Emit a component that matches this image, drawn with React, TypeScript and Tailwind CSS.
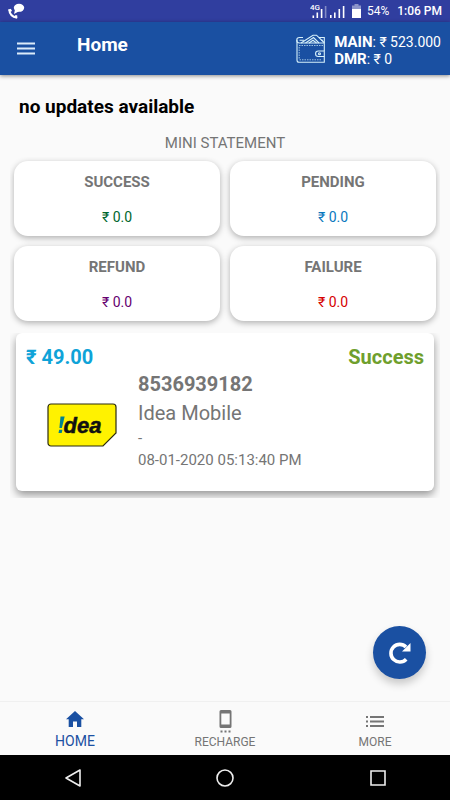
import React from 'react';

interface Total {
  id: string;
  label: string;
  amount: string;
  color: string;
}

const totals: Total[] = [
  { id: 'success', label: 'SUCCESS', amount: '₹ 0.0', color: 'text-[#00662e]' },
  { id: 'pending', label: 'PENDING', amount: '₹ 0.0', color: 'text-[#0a78be]' },
  { id: 'refund', label: 'REFUND', amount: '₹ 0.0', color: 'text-[#660070]' },
  { id: 'failure', label: 'FAILURE', amount: '₹ 0.0', color: 'text-[#d60000]' },
];

const StatusBar: React.FC = () => (
  <div className="h-[22px] bg-[#303e9f] flex items-center justify-between px-2 text-white">
    <svg className="w-[18px] h-[16px]" viewBox="0 0 18 16" fill="#fff">
      <ellipse cx="11" cy="4.8" rx="5.2" ry="4" />
      <path d="M7 6.5L6 11l5-2.8z" />
      <path d="M1.2 6.2C1.4 10.5 4.4 14 9.2 14.8" fill="none" stroke="#fff" strokeWidth="2" />
      <path d="M1.6 6.4l1.2 2.2M6.8 13.6l2.4 0" fill="none" stroke="#fff" strokeWidth="2.8" />
    </svg>
    <div className="flex items-center">
      <svg className="w-[36px] h-[16px]" viewBox="0 0 36 16" fill="#fff">
        <text x="0" y="7" fontSize="8" fontWeight="500" fontFamily="Roboto, sans-serif">4G</text>
        <path d="M2.5 12.5h1.6V15H2.5zM6.5 9.5h1.6V15H6.5zM10.8 6h1.6v9h-1.6z" />
        <path d="M14.8 3h1.6v12h-1.6z" opacity="0.4" />
        <path d="M20 12h1.6v3H20zM24 9.5h1.6V15H24zM28.5 6h1.6v9h-1.6zM32.8 3h1.6v12h-1.6z" />
      </svg>
      <svg className="w-[9px] h-[14px] ml-1.5" viewBox="0 0 9 14" fill="#fff">
        <path d="M2.5 0h4v1.5H9V5H0V1.5h2.5z" opacity="0.45" />
        <path d="M0 5h9v9H0z" />
      </svg>
      <span className="ml-1.5 text-[12px]">54%</span>
      <span className="ml-2 text-[12px] font-medium">1:06 PM</span>
    </div>
  </div>
);

const WalletIcon: React.FC = () => (
  <svg className="w-[30px] h-[30px]" viewBox="0 0 30 30" fill="none" stroke="#d6f0fa" strokeWidth="1.1">
    <path d="M7 3.5H3.5a2.7 2.7 0 0 0 0 5.500H28.300V17" />
    <path d="M1 6v20.200a2 2 0 0 0 2 2h25.300V22.500" />
    <path d="M23 3.500h5.300V9" />
    <path d="M5 9L17 1.200l3.500 0L28 8.500M9.500 9L17.500 3.500 23 9M13 9l4-2.800 3.500 2.800" />
    <path d="M3.500 6.200H8M25 6.200h2" />
    <path d="M3 11.500h24M3.500 25.800H26M3.200 13v12" strokeDasharray="1.500 1" strokeWidth="0.700" />
    <path d="M28.300 17h-6a2.700 2.700 0 0 0 0 5.500h6z" />
    <circle cx="23.500" cy="19.700" r="1" />
  </svg>
);

const AppBar: React.FC = () => (
  <header className="h-[53px] bg-[#1a50a2] text-white flex items-center pl-[17px] pr-[9px] shadow-[0_1px_4px_rgba(0,0,0,0.45)] relative">
    <button type="button" aria-label="Menu">
      <svg className="w-[18px] h-[13px]" viewBox="0 0 18 13" stroke="#dcebfa" strokeWidth="2">
        <path d="M0 1.500h18M0 6.500h18M0 11.500h18" />
      </svg>
    </button>
    <h1 className="ml-[42px] mb-1.5 text-[19px] font-bold">Home</h1>
    <div className="ml-auto flex items-center">
      <WalletIcon />
      <div className="ml-2 pt-1 text-[14px] leading-[17px]">
        <p><b className="text-[15px]">MAIN</b>: ₹ 523.000</p>
        <p><b className="text-[15px]">DMR</b>: ₹ 0</p>
      </div>
    </div>
  </header>
);

const TotalCard: React.FC<{ total: Total }> = ({ total }) => (
  <div className="h-[75px] bg-white rounded-[14px] shadow-[0_2px_6px_rgba(0,0,0,0.3)] flex flex-col items-center pt-3 text-[14px] leading-[18px]">
    <h3 className="font-bold text-[15px] text-[#757575]">{total.label}</h3>
    <p className={`mt-[17px] ${total.color}`}>{total.amount}</p>
  </div>
);

const IdeaLogo: React.FC = () => (
  <svg className="w-[70px] h-[44px]" viewBox="0 0 70 44" role="img" aria-label="Idea">
    <path d="M4 1h62a3 3 0 0 1 3 3v26L56 43H4a3 3 0 0 1-3-3V4a3 3 0 0 1 3-3z" fill="#fff200" stroke="#2b2b10" strokeWidth="1.200" />
    <path d="M13.500 13.500h4.200l-2.800 11.500h-2.500z" fill="#008290" />
    <path d="M12.200 26.700h3.200l-.7 3.300h-3.200z" fill="#008290" />
    <text x="16.500" y="30" fontSize="22" fontWeight="700" fontStyle="italic" fontFamily="'Liberation Sans', sans-serif" fill="#111" stroke="#111" strokeWidth="0.500">dea</text>
  </svg>
);

const TransactionCard: React.FC = () => (
  <article className="mx-1.5 bg-white rounded-[6px] shadow-[0_4px_8px_rgba(0,0,0,0.4)] px-2.5 pt-3 pb-5 text-[#757575]">
    <div className="flex justify-between text-[20px] leading-6 font-bold">
      <span className="text-[#0fa3d8]">₹ 49.00</span>
      <span className="text-[#6f9f2d]">Success</span>
    </div>
    <div className="flex items-center pt-px">
      <div className="w-[112px] flex justify-center pt-2">
        <IdeaLogo />
      </div>
      <div>
        <p className="text-[20px] leading-[29px] font-bold">8536939182</p>
        <p className="text-[20px] leading-[29px]">Idea Mobile</p>
        <p className="text-[15px] leading-[21px]">-</p>
        <p className="text-[15px] leading-[22px]">08-01-2020 05:13:40 PM</p>
      </div>
    </div>
  </article>
);

const BottomNav: React.FC = () => (
  <nav className="h-[54px] bg-[#fafafa] border-t border-[#f0f0f0] grid grid-cols-3 text-[12px] leading-4 text-[#757575]">
    <a href="#home" className="flex flex-col items-center justify-end pb-1.5 text-[14px] text-[#1a50a2]">
      <svg className="w-[18px] h-[16px] mb-1.5" viewBox="0 0 18 16" fill="currentColor">
        <path d="M9 0L0 8.200h2.700V16H7v-5.500h4V16h4.300V8.200H18z" />
      </svg>
      HOME
    </a>
    <a href="#recharge" className="flex flex-col items-center justify-end pb-[5px]">
      <svg className="w-[13px] h-[23px] mb-px" viewBox="0 0 13 23" fill="currentColor">
        <path fillRule="evenodd" d="M2 0h9a1.500 1.500 0 0 1 1.500 1.500v15A1.500 1.500 0 0 1 11 18H2A1.500 1.500 0 0 1 .5 16.500v-15A1.500 1.500 0 0 1 2 0zM2.300 3.500v11h8.400v-11z" />
        <path d="M1.500 20.500h2v2h-2zM5.500 20.500h2v2h-2zM9.500 20.500h2v2h-2z" />
      </svg>
      RECHARGE
    </a>
    <a href="#more" className="flex flex-col items-center justify-end pb-[5px]">
      <svg className="w-[18px] h-[11px] mb-[7px]" viewBox="0 0 18 11" fill="currentColor">
        <path d="M0 0h2v2H0zM4 0h14v2H4zM0 4.500h2v2H0zM4 4.500h14v2H4zM0 9h2v2H0zM4 9h14v2H4z" />
      </svg>
      MORE
    </a>
  </nav>
);

const SystemNav: React.FC = () => (
  <div className="h-[45px] bg-black grid grid-cols-3 items-center justify-items-center">
    <button type="button" aria-label="Back">
      <svg className="w-[18px] h-[18px] mr-1" viewBox="0 0 18 18" fill="none" stroke="#eee" strokeWidth="1.600">
        <path d="M16 1v16L2 9z" strokeLinejoin="round" />
      </svg>
    </button>
    <button type="button" aria-label="Home screen">
      <svg className="w-[18px] h-[18px]" viewBox="0 0 18 18" fill="none" stroke="#eee" strokeWidth="1.600">
        <circle cx="9" cy="9" r="8" />
      </svg>
    </button>
    <button type="button" aria-label="Recent apps">
      <svg className="w-[16px] h-[16px] ml-1.5" viewBox="0 0 16 16" fill="none" stroke="#eee" strokeWidth="1.600">
        <path d="M1 1h14v14H1z" />
      </svg>
    </button>
  </div>
);

const App: React.FC = () => {
  return (
    <div className="min-h-screen flex flex-col bg-[#fafafa] font-[Roboto,'Noto_Sans',sans-serif]">
      <StatusBar />
      <AppBar />
      <main className="flex-1 relative">
        <h2 className="pt-5 pl-[19px] text-[19px] leading-6 font-bold text-black">no updates available</h2>
        <p className="mt-3.5 text-center text-[15px] leading-5 text-[#757575]">MINI STATEMENT</p>
        <div className="mx-2.5 mt-1 overflow-hidden">
          <div className="grid grid-cols-2 gap-2.5 px-1 pt-1 pb-3">
            {totals.map((total) => (
              <TotalCard key={total.id} total={total} />
            ))}
          </div>
        </div>
        <div className="mx-2.5 pb-[7px] overflow-hidden">
          <TransactionCard />
        </div>
        <button
          type="button"
          aria-label="Refresh"
          className="absolute right-6 bottom-[22px] w-[53px] h-[53px] rounded-full bg-[#1a50a2] shadow-[0_5px_8px_rgba(0,0,0,0.2)] flex items-center justify-center"
        >
          <svg className="w-[22px] h-[22px]" viewBox="0 0 22 22" fill="#fff">
            <path d="M17 5A8.800 8.800 0 1 0 17.200 17.200" fill="none" stroke="#fff" strokeWidth="3.600" />
            <path d="M21.500 1v8.500H13z" />
          </svg>
        </button>
      </main>
      <BottomNav />
      <SystemNav />
    </div>
  );
};

export default App;
